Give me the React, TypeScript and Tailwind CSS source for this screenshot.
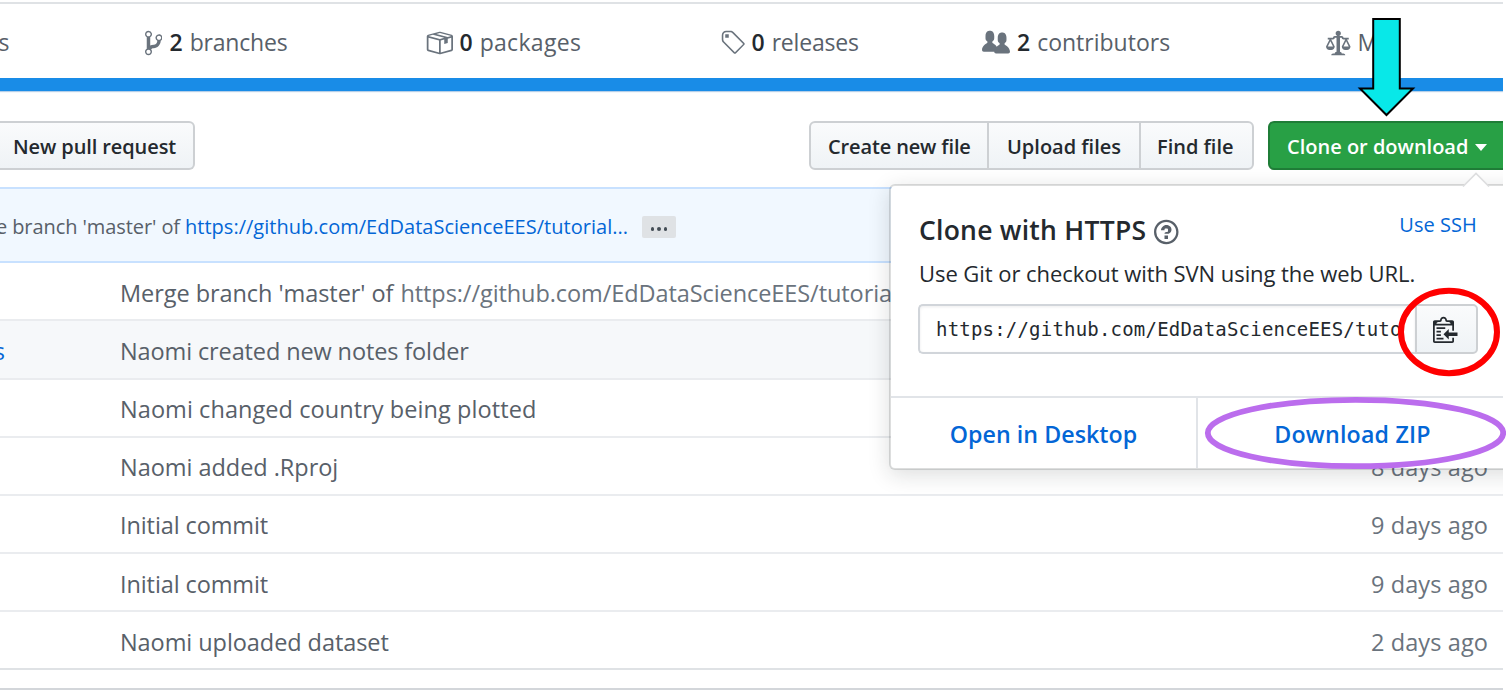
import React from "react";

const ICONS = {
  branch: {
    w: 10,
    d: "M10 5c0-1.11-.89-2-2-2a1.993 1.993 0 0 0-1 3.72v.3c-.02.52-.23.98-.63 1.38-.4.4-.86.61-1.38.63-.83.02-1.48.16-2 .45V4.72a1.993 1.993 0 0 0-1-3.72C.88 1 0 1.89 0 3a2 2 0 0 0 1 1.72v6.56c-.59.35-1 .99-1 1.72 0 1.11.89 2 2 2 1.11 0 2-.89 2-2 0-.53-.2-1-.53-1.36.09-.06.48-.41.59-.47.25-.11.56-.17.94-.17 1.05-.05 1.95-.45 2.75-1.25S8.95 7.77 9 6.73h-.02C9.59 6.37 10 5.73 10 5zM2 1.8c.66 0 1.2.55 1.2 1.2 0 .65-.55 1.2-1.2 1.2C1.35 4.2.8 3.65.8 3c0-.65.55-1.2 1.2-1.2zm0 12.41c-.66 0-1.2-.55-1.2-1.2 0-.65.55-1.2 1.2-1.2.65 0 1.2.55 1.2 1.2 0 .65-.55 1.2-1.2 1.2zm6-8c-.66 0-1.2-.55-1.2-1.2 0-.65.55-1.2 1.2-1.2.65 0 1.2.55 1.2 1.2 0 .65-.55 1.2-1.2 1.2z",
  },
  pkg: {
    w: 16,
    d: "M1 4.27v7.47c0 .45.3.84.75.97l6.5 1.73c.16.05.34.05.5 0l6.5-1.73c.45-.13.75-.52.75-.97V4.27c0-.45-.3-.84-.75-.97l-6.5-1.74a1.4 1.4 0 0 0-.5 0L1.75 3.3c-.45.13-.75.52-.75.97zm7 9.09l-6-1.59V5l6 1.61v6.75zM2 4l2.5-.67L11 5.06l-2.5.67L2 4zm13 7.77l-6 1.59V6.61l2-.55V8.5l2-.53V5.53L15 5v6.77zm-2-7.24L6.5 2.8l2-.53L15 4l-2 .53z",
  },
  tag: {
    w: 14,
    d: "M7.73 1.73C7.26 1.26 6.62 1 5.96 1H3.5C2.13 1 1 2.13 1 3.5v2.47c0 .66.27 1.3.73 1.77l6.06 6.06c.39.39 1.02.39 1.41 0l4.59-4.59a.996.996 0 0 0 0-1.41L7.73 1.73zM2.38 7.09c-.31-.3-.47-.7-.47-1.13V3.5c0-.88.72-1.59 1.59-1.59h2.47c.42 0 .83.16 1.13.47l6.14 6.13-4.73 4.73-6.13-6.15zM3.01 3h2v2H3V3h.01z",
  },
  people: {
    w: 16,
    d: "M16 12.999c0 .439-.45 1-1 1H7.995c-.539 0-.994-.447-.995-.999H1c-.54 0-1-.561-1-1 0-2.634 3-4 3-4s.229-.409 0-1c-.841-.621-1.058-.59-1-3 .058-2.419 1.367-3 2.5-3s2.442.58 2.5 3c.058 2.41-.159 2.379-1 3-.229.59 0 1 0 1s1.549.711 2.42 2.088C9.196 9.369 10 8.999 10 8.999s.229-.409 0-1c-.841-.62-1.058-.59-1-3 .058-2.419 1.367-3 2.5-3s2.437.581 2.495 3c.059 2.41-.158 2.38-1 3-.229.59 0 1 0 1s3.005 1.366 3.005 4",
  },
  law: {
    w: 14,
    d: "M7 4c-.83 0-1.5-.67-1.5-1.5S6.17 1 7 1s1.5.67 1.5 1.5S7.83 4 7 4zm7 6c0 1.11-.89 2-2 2h-1c-1.11 0-2-.89-2-2l2-4h-1c-.55 0-1-.45-1-1H8v8c.42 0 1 .45 1 1h1c.42 0 1 .45 1 1H3c0-.55.58-1 1-1h1c0-.55.58-1 1-1h.03L6 5H5c0 .55-.45 1-1 1H3l2 4c0 1.11-.89 2-2 2H2c-1.11 0-2-.89-2-2l2-4H1V5h3c0-.55.45-1 1-1h4c.55 0 1 .45 1 1h3v1h-1l2 4zM2.5 7L1 10h3L2.5 7zM13 10l-1.5-3-1.5 3h3z",
  },
  question: {
    w: 14,
    d: "M6 10h2v2H6v-2zm4-3.5C10 8.64 8 9 8 9H6c0-.55.45-1 1-1h.5c.28 0 .5-.22.5-.5v-1c0-.28-.22-.5-.5-.5h-1c-.28 0-.5.22-.5.5V7H4c0-1.5 1.5-3 3-3s3 1 3 2.5zM7 2.3c3.14 0 5.7 2.56 5.7 5.7s-2.56 5.7-5.7 5.7A5.71 5.71 0 0 1 1.3 8c0-3.14 2.56-5.7 5.7-5.7zM7 1C3.14 1 0 4.14 0 8s3.14 7 7 7 7-3.14 7-7-3.14-7-7-7z",
  },
  clippy: {
    w: 14,
    d: "M2 13h4v1H2v-1zm5-6H2v1h5V7zm2 3V8l-3 3 3 3v-2h5v-2H9zM4.5 9H2v1h2.5V9zM2 12h2.5v-1H2v1zm9 1h1v2c-.02.28-.11.52-.3.7-.19.18-.42.28-.7.3H1c-.55 0-1-.45-1-1V4c0-.55.45-1 1-1h3c0-1.11.89-2 2-2 1.11 0 2 .89 2 2h3c.55 0 1 .45 1 1v5h-1V6H1v9h10v-2zM2 5h8c0-.55-.45-1-1-1H8c-.55 0-1-.45-1-1s-.45-1-1-1-1 .45-1 1-.45 1-1 1H3c-.55 0-1 .45-1 1z",
  },
};

function Icon({ name, scale = 1.75, className = "" }: { name: keyof typeof ICONS; scale?: number; className?: string }) {
  const { w, d } = ICONS[name];
  return (
    <svg width={w * scale} height={16 * scale} viewBox={`0 0 ${w} 16`} fill="currentColor" className={`shrink-0 ${className}`}>
      <path d={d} />
    </svg>
  );
}

function Stat({ icon, count, label, track, gap = "gap-[7px]" }: { icon: keyof typeof ICONS; count?: string; label: string; track: string; gap?: string }) {
  return (
    <div className={`flex items-center ${gap}`}>
      <Icon name={icon} className="text-[#6a737d]" />
      <span className="flex gap-[7px] text-[23px]">
        {count && <b className="font-semibold text-[#24292e]">{count}</b>}
        <span className={track}>{label}</span>
      </span>
    </div>
  );
}

const GREY_BTN = "flex h-[49px] shrink-0 items-center border-2 border-[#cdd0d3] bg-linear-to-b from-[#fafbfc] to-[#eff3f6] pt-[3px] text-[20px] font-semibold text-[#24292e]";

const ROWS = [
  { h: "h-[58px] pt-[6px]", text: "Merge branch 'master' of", track: "tracking-[-0.06px]", link: "https://github.com/EdDataScienceEES/tutorial", age: "" },
  { h: "h-[59px] bg-[#f6f8fa] pt-[5px]", name: "s", text: "Naomi created new notes folder", track: "tracking-[-0.12px]", age: "" },
  { h: "h-[58px] pt-[3px]", text: "Naomi changed country being plotted", track: "tracking-[0.07px]", age: "" },
  { h: "h-[58px] pt-[3px]", text: "Naomi added .Rproj", track: "tracking-[-0.04px]", age: "8 days ago" },
  { h: "h-[58px] pt-[3px]", text: "Initial commit", track: "tracking-[-0.1px]", age: "9 days ago" },
  { h: "h-[58px] pt-[6px]", text: "Initial commit", track: "tracking-[-0.1px]", age: "9 days ago" },
  { h: "h-[58px] pt-[6px]", text: "Naomi uploaded dataset", track: "tracking-[-0.07px]", age: "2 days ago" },
];

function ClonePopup() {
  return (
    <div className="absolute top-[184px] left-[889px] h-[286px] w-[640px] rounded-[6px] border-2 border-[#1b1f23]/15 bg-white bg-clip-padding shadow-[0_5px_21px_rgba(27,31,35,0.15)]">
      <svg className="absolute top-[-14px] left-[571px]" width="28" height="15" viewBox="0 0 28 15">
        <path d="M1 14.5 L14 1.5 L27 14.5" fill="#fff" stroke="#dddedf" strokeWidth="1.6" />
      </svg>
      <div className="flex h-[210px] flex-col pl-[28px]">
        <div className="flex h-[66px] items-start pt-[24px]">
          <h4 className="text-[26.5px] leading-[40px] font-semibold tracking-[0.25px] text-[#24292e]">Clone with HTTPS</h4>
          <Icon name="question" className="mt-[8px] ml-[8px] text-[#586069]" />
          <a className="ml-[220.5px] text-[20px] leading-[30px] tracking-[0.05px] text-[#0366d6]">Use SSH</a>
        </div>
        <p className="mt-[4px] text-[22px] leading-[34px] tracking-[-0.06px] text-[#24292e]">Use Git or checkout with SVN using the web URL.</p>
        <div className="mt-[14px] -ml-px flex h-[50px] w-[560px]">
          <div className="flex w-[497px] items-center overflow-hidden rounded-l-[5px] border-2 border-r-0 border-[#d1d5da] pt-px pl-[16px] shadow-[inset_0_1px_3px_rgba(27,31,35,0.08)]">
            <span className="block w-[468px] overflow-hidden font-['DejaVu_Sans_Mono'] text-[19px] tracking-[0.2px] whitespace-nowrap text-[#24292e]">https://github.com/EdDataScienceEES/tuto</span>
          </div>
          <button className="flex w-[63px] items-center justify-center rounded-r-[5px] border-2 border-[#cdd0d3] bg-linear-to-b from-[#fafbfc] to-[#eff3f6] pr-[2px] text-[#24292e]">
            <Icon name="clippy" />
          </button>
        </div>
      </div>
      <div className="flex h-[72px] border-t-2 border-[#e1e4e8] text-[23.2px] font-semibold text-[#0366d6]">
        <a className="flex w-[307px] items-center justify-center border-r-2 border-[#e1e4e8] pt-[3px] tracking-[0.05px]">Open in Desktop</a>
        <a className="flex w-[309px] items-center justify-center pt-[3px] tracking-[0.2px]">Download ZIP</a>
      </div>
    </div>
  );
}

export default function App() {
  return (
    <div className="relative h-[690px] w-[1506px] overflow-hidden bg-white font-['Open_Sans','Noto_Sans',sans-serif] whitespace-nowrap text-[#586069]">
      <div className="relative flex h-full w-[1503px] flex-col overflow-hidden">
        <div className="mt-[2px] grid h-[76px] shrink-0 grid-cols-[144.5px_280px_295.5px_262px_344px_1fr] items-center border-t-2 border-[#dfe2e5] pt-[3px]">
          <span className="flex w-[9.5px] justify-end text-[23px]">s</span>
          <Stat icon="branch" count="2" label="branches" track="tracking-[-0.2px]" gap="gap-[7.5px]" />
          <Stat icon="pkg" count="0" label="packages" track="tracking-[0.3px]" />
          <Stat icon="tag" count="0" label="releases" track="tracking-[-0.2px]" />
          <Stat icon="people" count="2" label="contributors" track="tracking-[0px]" />
          <Stat icon="law" label="MIT" track="" gap="gap-[7px]" />
        </div>
        <div className="h-[13px] shrink-0 bg-[#198ce7] shadow-[0_1px_1px_#b5cfe8]" />

        <div className="flex h-[96px] shrink-0 items-start pt-[30px]">
          <button className={`${GREY_BTN} w-[195px] rounded-r-[6px] border-l-0 pl-[13px] tracking-[-0.1px]`}>New pull request</button>
          <div className="ml-[614px] flex shrink-0">
            <button className={`${GREY_BTN} w-[180px] rounded-l-[6px] pl-[17px] tracking-[-0.13px]`}>Create new file</button>
            <button className={`${GREY_BTN} -ml-[2px] w-[154px] pl-[18px] tracking-[0px]`}>Upload files</button>
            <button className={`${GREY_BTN} -ml-[2px] w-[115px] rounded-r-[6px] pl-[16px]`}>Find file</button>
          </div>
          <button className="ml-[13.5px] flex h-[49px] w-[250px] shrink-0 items-center rounded-l-[6px] border-2 border-[#1f7d37] bg-[#28a045] pt-[3px] pl-[17.5px] text-[20px] font-semibold text-white">
            Clone or download
            <span className="mt-px ml-[7px] border-x-[6.5px] border-t-[7px] border-x-transparent border-t-white" />
          </button>
        </div>

        <div className="flex h-[76px] shrink-0 items-center border-y-2 border-[#c8e1ff] bg-[#f1f8ff] pt-[3px] text-[20px]">
          <span className="flex w-[180px] justify-end tracking-[-0.08px]">Merge branch 'master' of</span>
          <a className="ml-[5px] tracking-[0.02px] text-[#0366d6]">https://github.com/EdDataScienceEES/tutorial...</a>
          <span className="ml-[14px] flex h-[22px] w-[34px] items-center justify-center gap-[3px] rounded-[2px] bg-[#dfe2e5] pt-[5px] text-[#444d56]">
            <i className="size-[3.5px] rounded-full bg-current" />
            <i className="size-[3.5px] rounded-full bg-current" />
            <i className="size-[3.5px] rounded-full bg-current" />
          </span>
        </div>

        <div className="flex flex-col text-[23.5px]">
          {ROWS.map((r, i) => (
            <div key={i} className={`flex shrink-0 items-center border-b-2 ${i === 6 ? "border-[#dfe2e5]" : "border-[#eaecef]"} ${r.h}`}>
              <span className="flex w-[120px] shrink-0"><span className="flex w-[5px] justify-end text-[#0366d6]">{r.name}</span></span>
              <span className={r.track}>{r.text}</span>
              {r.link && <span className="ml-[7px] tracking-[-0.08px] text-[#6a737d]">{r.link}</span>}
              <span className="mr-[15px] ml-auto tracking-[0.1px] text-[#6a737d]">{r.age}</span>
            </div>
          ))}
        </div>
        <div className="mt-[18px] h-[2px] shrink-0 bg-[#d3d6da]" />
        <ClonePopup />
      </div>

      <svg className="absolute inset-0" width="1506" height="690" viewBox="0 0 1506 690" fill="none">
        <path d="M1373.2 19 H1399.8 V88.5 H1413 L1386.5 115 L1360 88.5 H1373.2 Z" fill="#08e8e8" stroke="#000" strokeWidth="2" />
        <ellipse cx="1449" cy="332" rx="48" ry="41.2" stroke="#ff0000" strokeWidth="6" />
        <ellipse cx="1355.5" cy="433" rx="147.7" ry="33.2" stroke="#bb6ded" strokeWidth="5.8" />
      </svg>
    </div>
  );
}
